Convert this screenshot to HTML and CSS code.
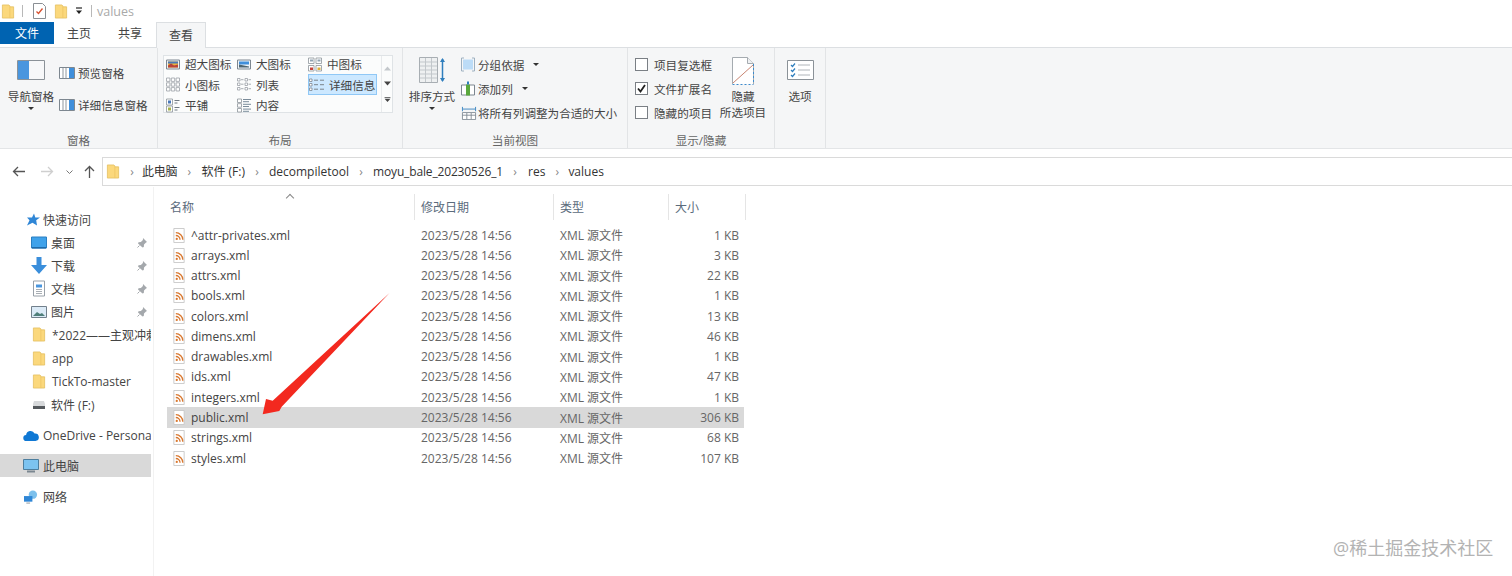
FILE: index.html
```html
<!DOCTYPE html>
<html lang="zh-CN">
<head>
<meta charset="utf-8">
<title>values</title>
<link rel="stylesheet" href="styles.css">
</head>
<body>
<svg class="sprite" width="0" height="0">
  <symbol id="folder" viewBox="0 0 14 16"><path d="M1 1h7l1 1v1h4v12H1z" fill="#fbd87c" stroke="#e3bd5c" stroke-width=".8"/><path d="M9 3v12" stroke="#f0c766" stroke-width="1"/></symbol>
  <symbol id="xml" viewBox="0 0 14 16"><path d="M1.500 .5h11v15h-11z" fill="#fff" stroke="#c9c9c9"/><circle cx="4.600" cy="11.600" r="1.200" fill="#d9772e"/><path d="M3.600 8a4.500 4.500 0 0 1 4.500 4.500M3.600 5a7.500 7.500 0 0 1 7.500 7.500" fill="none" stroke="#d9772e" stroke-width="1.400"/></symbol>
  <symbol id="pin" viewBox="0 0 12 12"><path d="M7 1l4 4-1 .6-2 2-.2 2.400-1.300.5L2 6.500l.5-1.300 2.400-.2 2-2z" fill="#a4a8ac"/><path d="M3.500 8.500L1.500 10.500" stroke="#a4a8ac"/></symbol>
  <symbol id="pane" viewBox="0 0 16 12"><path d="M.5.500h15v11H.5z" fill="#fff" stroke="#7d8790"/><path d="M10 1h5v10h-5z" fill="#3f8fdb"/><path d="M4 1v10M7 1v10" stroke="#8f979e"/></symbol>
  <symbol id="g-xl" viewBox="0 0 14 14"><path d="M.5 2.500h13v9H.5z" fill="#eef1f3" stroke="#7d8790"/><path d="M2 4h10v6H2z" fill="#e9b43c"/><path d="M2 8l3-2 3 2 4-1v3H2z" fill="#b8433a"/><path d="M2 4h10v2H2z" fill="#4a78b8"/></symbol>
  <symbol id="g-l" viewBox="0 0 14 14"><path d="M.5 2.500h13v9H.5z" fill="#eef5fb" stroke="#7d8790"/><path d="M2 4h10v3H2z" fill="#3f8fdb"/><path d="M2 7l5 1 5 1v1H2z" fill="#4d6570"/></symbol>
  <symbol id="g-m" viewBox="0 0 14 14"><path d="M.5.500h5.500v5.500H.5zM8 .5h5.500v5.500H8zM.5 8h5.500v5.500H.5zM8 8h5.500v5.500H8z" fill="#fff" stroke="#8d949b" stroke-width=".8"/><path d="M2 10h3v2.500H2z" fill="#c9443a"/><path d="M9.500 10h3v2.500h-3z" fill="#dcb13c"/><path d="M2 2h3v2H2zM9.500 2h3v2h-3z" fill="#8fa3b3"/></symbol>
  <symbol id="g-s" viewBox="0 0 14 14"><path d="M.5.500h3.400v3.400H.5zM5.300.5h3.400v3.400H5.300zM10.100.5h3.400v3.400h-3.400zM.5 5.300h3.400v3.400H.5zM5.300 5.300h3.400v3.400H5.300zM10.100 5.300h3.400v3.400h-3.400zM.5 10.100h3.400v3.400H.5zM5.300 10.100h3.400v3.400H5.300zM10.100 10.100h3.400v3.400h-3.400z" fill="#fff" stroke="#9aa0a6" stroke-width=".8"/></symbol>
  <symbol id="g-list" viewBox="0 0 14 14"><path d="M.5 1h2.500v2.500H.5zM.5 5.500h2.500v2.500H.5zM.5 10h2.500v2.500H.5zM8 1h2.500v2.500H8zM8 5.500h2.500v2.500H8zM8 10h2.500v2.500H8z" fill="#fff" stroke="#9aa0a6" stroke-width=".8"/><path d="M4 2.200h2.500M4 6.700h2.500M4 11.200h2.500M11.500 2.200h2.500M11.500 6.700h2.500M11.500 11.200h2.500" stroke="#a8aeb3"/></symbol>
  <symbol id="g-det" viewBox="0 0 16 14"><path d="M.5 1h2.500v2.500H.5zM.5 5.500h2.500v2.500H.5zM.5 10h2.500v2.500H.5z" fill="#fff" stroke="#7d8790" stroke-width=".8"/><path d="M5 2.200h4M5 6.700h4M5 11.200h4M11 2.200h4M11 6.700h4M11 11.200h4" stroke="#7b848c"/></symbol>
  <symbol id="g-tile" viewBox="0 0 14 14"><path d="M.5.500h6v6H.5zM.5 7.500h6v6H.5z" fill="#fff" stroke="#8d949b" stroke-width=".8"/><path d="M2 2h3v3H2z" fill="#4a78b8"/><path d="M2 9h3v3H2z" fill="#a7b34a"/><path d="M8.500 2h5M8.500 4.500h3M8.500 9h5M8.500 11.500h3" stroke="#6f7880"/></symbol>
  <symbol id="g-cont" viewBox="0 0 14 14"><path d="M.5.500h4v3.500H.5zM.5 5.200h4v3.500H.5zM.5 10h4v3.500H.5z" fill="#fff" stroke="#8d949b" stroke-width=".8"/><path d="M6 1h8M6 3.200h6M6 5.800h8M6 8h6M6 10.600h8M6 12.800h6" stroke="#7b8c9a"/></symbol>
</svg>

<div class="titlebar">
  <svg class="ic14"><use href="#folder"/></svg>
  <span class="tsep"></span>
  <svg class="docq" viewBox="0 0 13 16"><path d="M.5.500h9l3 3v12H.5z" fill="#fff" stroke="#8a8f94"/><path d="M3.500 8.500l2 2 4-5" fill="none" stroke="#d8502f" stroke-width="1.300"/></svg>
  <svg class="ic14 second"><use href="#folder"/></svg>
  <svg class="qa" viewBox="0 0 8 8"><path d="M1 1h6" stroke="#222" stroke-width="1.200"/><path d="M1 3.500h6L4 7z" fill="#222"/></svg>
  <span class="tsep"></span>
  <span class="title">values</span>
</div>

<nav class="tabs">
  <span class="tab file">文件</span>
  <span class="tab home">主页</span>
  <span class="tab share">共享</span>
  <span class="tab view">查看</span>
</nav>

<section class="ribbon">
  <div class="group g1">
    <div class="gbody">
      <div class="bigbtn nav">
        <svg class="navic" viewBox="0 0 28 20"><path d="M.5.500h27v19H.5z" fill="#f7f8f9" stroke="#8b9298"/><path d="M1 1h11v18H1z" fill="#4a96de"/></svg>
        <span>导航窗格</span><i class="caret"></i>
      </div>
      <div class="stack panes">
        <div class="cmd"><svg class="ic16"><use href="#pane"/></svg><span>预览窗格</span></div>
        <div class="cmd"><svg class="ic16"><use href="#pane"/></svg><span>详细信息窗格</span></div>
      </div>
    </div>
    <div class="glabel">窗格</div>
  </div>

  <div class="group g2">
    <div class="gbody">
      <div class="gallery">
        <div class="grid">
          <div class="gi"><svg class="ic14"><use href="#g-xl"/></svg>超大图标</div>
          <div class="gi"><svg class="ic14"><use href="#g-l"/></svg>大图标</div>
          <div class="gi"><svg class="ic14"><use href="#g-m"/></svg>中图标</div>
          <div class="gi"><svg class="ic14"><use href="#g-s"/></svg>小图标</div>
          <div class="gi"><svg class="ic14"><use href="#g-list"/></svg>列表</div>
          <div class="gi sel"><svg class="ic16"><use href="#g-det"/></svg>详细信息</div>
          <div class="gi"><svg class="ic14"><use href="#g-tile"/></svg>平铺</div>
          <div class="gi"><svg class="ic14"><use href="#g-cont"/></svg>内容</div>
        </div>
        <div class="gscroll">
          <svg viewBox="0 0 7 4"><path d="M0 4l3.500-4L7 4z" fill="#c4c8cc"/></svg>
          <svg viewBox="0 0 7 4"><path d="M0 0l3.500 4L7 0z" fill="#444"/></svg>
          <svg viewBox="0 0 7 6"><path d="M0 .5h7" stroke="#444"/><path d="M0 2l3.500 4L7 2z" fill="#444"/></svg>
        </div>
      </div>
    </div>
    <div class="glabel">布局</div>
  </div>

  <div class="group g3">
    <div class="gbody">
      <div class="bigbtn sort">
        <svg class="sortic" viewBox="0 0 27 26"><path d="M.5.500h18v25H.5z" fill="#eef0f1" stroke="#a8aeb3"/><path d="M1 5h17M1 9h17M1 13h17M1 17h17M1 21h17M6.500 1v24M12.500 1v24" stroke="#c2c7cb"/><path d="M23.500 2v22" stroke="#2f7ebd" stroke-width="1.500"/><path d="M21 5l2.500-4L26 5zM21 21l2.500 4L26 21z" fill="#2f7ebd"/></svg>
        <span>排序方式</span><i class="caret"></i>
      </div>
      <div class="stack view3">
        <div class="cmd"><svg class="ic14" viewBox="0 0 14 14"><path d="M2 2h10v10H2z" fill="#bcdcf7"/><path d="M3 .5H.5v13H3M11 .5h2.500v13H11" fill="none" stroke="#9db0c0"/></svg><span>分组依据</span><i class="tri"></i></div>
        <div class="cmd"><svg class="ic14" viewBox="0 0 14 14"><path d="M.5 3.500h13v10H.5z" fill="#fff" stroke="#7d8790"/><path d="M5 3h4v11H5z" fill="#5aa83c"/><path d="M7 0v3" stroke="#2f7ebd" stroke-width="2"/></svg><span>添加列</span><i class="tri"></i></div>
        <div class="cmd"><svg class="ic16" viewBox="0 0 16 16"><path d="M1 3.500h14" stroke="#2f7ebd"/><path d="M.5 1v5M15.500 1v5" stroke="#2f7ebd"/><path d="M.5 7.500h15v8H.5zM.5 10.500h15M5.500 8v7M10.500 8v7" fill="#fff" stroke="#7d8790"/></svg><span>将所有列调整为合适的大小</span></div>
      </div>
    </div>
    <div class="glabel">当前视图</div>
  </div>

  <div class="group g4">
    <div class="gbody">
      <div class="stack checks">
        <label class="check"><i class="box"></i>项目复选框</label>
        <label class="check"><i class="box on"><svg viewBox="0 0 11 11"><path d="M2 5.500l2.500 3L9 2" fill="none" stroke="#222" stroke-width="1.800"/></svg></i>文件扩展名</label>
        <label class="check"><i class="box"></i>隐藏的项目</label>
      </div>
      <div class="bigbtn hide">
        <svg class="hideic" viewBox="0 0 22 28"><path d="M.5 27V.5h15l6 6V27" fill="#fff" stroke="#a5abb0"/><path d="M15.500.5v6h6" fill="#eef0f2" stroke="#a5abb0"/><path d="M.5 27.500h21" stroke="#3d8bcc" stroke-dasharray="2 2"/><path d="M21.500 7v20" stroke="#3d8bcc" stroke-dasharray="2 2"/><path d="M1 26L21 8" stroke="#c98572"/></svg>
        <span>隐藏</span><span>所选项目</span>
      </div>
    </div>
    <div class="glabel">显示/隐藏</div>
  </div>

  <div class="group g5">
    <div class="gbody">
      <div class="bigbtn opts">
        <svg class="optic" viewBox="0 0 27 20"><path d="M.5.500h26v19H.5z" fill="#fff" stroke="#8b9298"/><path d="M11 5h12M11 10h12M11 15h12" stroke="#b0b5ba"/><path d="M4 5l1.500 1.500L8 3.500M4 10l1.500 1.500L8 8.500M4 15l1.500 1.500L8 13.500" fill="none" stroke="#2f7ebd" stroke-width="1.200"/></svg>
        <span>选项</span>
      </div>
    </div>
  </div>
</section>

<div class="addr">
  <div class="navbtns">
    <svg class="back" viewBox="0 0 13 11"><path d="M13 5.500H1.500M6 1L1.500 5.500 6 10" fill="none" stroke="#555" stroke-width="1.300"/></svg>
    <svg class="fwd" viewBox="0 0 13 11"><path d="M0 5.500h11.500M7 1l4.500 4.500L7 10" fill="none" stroke="#cfcfcf" stroke-width="1.300"/></svg>
    <svg class="drop" viewBox="0 0 7 4"><path d="M.5.500L3.500 3.500 6.500.5" fill="none" stroke="#777"/></svg>
    <svg class="up" viewBox="0 0 11 13"><path d="M5.500 13V1.500M1 6l4.500-4.500L10 6" fill="none" stroke="#555" stroke-width="1.300"/></svg>
  </div>
  <div class="crumbs">
    <svg class="ic14"><use href="#folder"/></svg>
    <b>›</b><span>此电脑</span><b>›</b><span>软件 (F:)</span><b>›</b><span>decompiletool</span><b>›</b><span>moyu_bale_20230526_1</span><b>›</b><span>res</span><b>›</b><span>values</span>
  </div>
</div>

<main class="main">
  <aside class="side">
    <div class="si quick"><svg class="ic14" viewBox="0 0 14 14"><path d="M8 1l1.300 4H14l-3.800 2.800L11 13 6.500 10.300 1 13l2.500-5.200L1 5h5z" fill="#2f86d6"/></svg>快速访问</div>
    <div class="si l2"><svg class="ic16" viewBox="0 0 16 14"><path d="M.5 1h15v11H.5z" fill="#3fa2ea" stroke="#2a7fc2"/><path d="M1 11h14v1.500H1z" fill="#1f6aa8"/></svg>桌面<svg class="pin"><use href="#pin"/></svg></div>
    <div class="si l2"><svg class="ic16 tall" viewBox="0 0 16 17"><path d="M5.500 0h5v8H16l-8 9-8-9h5.500z" fill="#3a8edb"/></svg>下载<svg class="pin"><use href="#pin"/></svg></div>
    <div class="si l2"><svg class="ic16 tall" viewBox="0 0 16 16"><path d="M2.500.5h11v15h-11z" fill="#fff" stroke="#98a0a8"/><path d="M5 4h6v3H5z" fill="#4a96de"/><path d="M5 9h6M5 11h6M5 13h6" stroke="#a8aeb4"/></svg>文档<svg class="pin"><use href="#pin"/></svg></div>
    <div class="si l2"><svg class="ic16" viewBox="0 0 16 14"><path d="M.5 1.500h15v11H.5z" fill="#dcebf7" stroke="#72808c"/><path d="M2 11l4-4 3 2 2-1 3 3z" fill="#4f7f7a"/></svg>图片<svg class="pin"><use href="#pin"/></svg></div>
    <div class="si l2"><svg class="ic14 fold"><use href="#folder"/></svg><span class="clip">*2022——主观冲刺</span></div>
    <div class="si l2 app"><svg class="ic14 fold"><use href="#folder"/></svg>app</div>
    <div class="si l2"><svg class="ic14 fold"><use href="#folder"/></svg>TickTo-master</div>
    <div class="si l2"><svg class="ic16" viewBox="0 0 16 12"><path d="M2 5l1-3h10l1 3v5H2z" fill="#d7d9db"/><path d="M2 7h12v3H2z" fill="#55595d"/></svg>软件 (F:)</div>
    <div class="si l1 od"><svg class="ic16" viewBox="0 0 16 11"><path d="M3.500 10.500a3 3 0 0 1-.4-6A4.500 4.500 0 0 1 11.600 3a3.600 3.600 0 0 1 .9 7.500z" fill="#0f78d4"/></svg><span class="clip">OneDrive - Personal</span></div>
    <div class="si l1 pc"><svg class="ic16" viewBox="0 0 16 14"><path d="M.5.500h15v10H.5z" fill="#7cc3f0" stroke="#4d7e9e"/><path d="M4 12.500h8" stroke="#7b8790" stroke-width="2"/></svg>此电脑</div>
    <div class="si l1 net"><svg class="ic16" viewBox="0 0 16 15"><circle cx="10" cy="5" r="4.500" fill="#7cc0ec"/><path d="M.5 6.500h9v6h-9z" fill="#2f86d6"/><path d="M3 14h4" stroke="#8a9299"/></svg>网络</div>
  </aside>

  <section class="files">
    <i class="sortup"></i>
    <div class="row head">
      <span class="c-name">名称</span><span class="c-date">修改日期</span><span class="c-type">类型</span><span class="c-size">大小</span>
    </div>
    <div class="rows">
      <div class="row"><span class="c-name"><svg class="ic14"><use href="#xml"/></svg>^attr-privates.xml</span><span class="c-date">2023/5/28 14:56</span><span class="c-type">XML 源文件</span><span class="c-size">1 KB</span></div>
      <div class="row"><span class="c-name"><svg class="ic14"><use href="#xml"/></svg>arrays.xml</span><span class="c-date">2023/5/28 14:56</span><span class="c-type">XML 源文件</span><span class="c-size">3 KB</span></div>
      <div class="row"><span class="c-name"><svg class="ic14"><use href="#xml"/></svg>attrs.xml</span><span class="c-date">2023/5/28 14:56</span><span class="c-type">XML 源文件</span><span class="c-size">22 KB</span></div>
      <div class="row"><span class="c-name"><svg class="ic14"><use href="#xml"/></svg>bools.xml</span><span class="c-date">2023/5/28 14:56</span><span class="c-type">XML 源文件</span><span class="c-size">1 KB</span></div>
      <div class="row"><span class="c-name"><svg class="ic14"><use href="#xml"/></svg>colors.xml</span><span class="c-date">2023/5/28 14:56</span><span class="c-type">XML 源文件</span><span class="c-size">13 KB</span></div>
      <div class="row"><span class="c-name"><svg class="ic14"><use href="#xml"/></svg>dimens.xml</span><span class="c-date">2023/5/28 14:56</span><span class="c-type">XML 源文件</span><span class="c-size">46 KB</span></div>
      <div class="row"><span class="c-name"><svg class="ic14"><use href="#xml"/></svg>drawables.xml</span><span class="c-date">2023/5/28 14:56</span><span class="c-type">XML 源文件</span><span class="c-size">1 KB</span></div>
      <div class="row"><span class="c-name"><svg class="ic14"><use href="#xml"/></svg>ids.xml</span><span class="c-date">2023/5/28 14:56</span><span class="c-type">XML 源文件</span><span class="c-size">47 KB</span></div>
      <div class="row"><span class="c-name"><svg class="ic14"><use href="#xml"/></svg>integers.xml</span><span class="c-date">2023/5/28 14:56</span><span class="c-type">XML 源文件</span><span class="c-size">1 KB</span></div>
      <div class="row picked"><span class="c-name"><svg class="ic14"><use href="#xml"/></svg>public.xml</span><span class="c-date">2023/5/28 14:56</span><span class="c-type">XML 源文件</span><span class="c-size">306 KB</span></div>
      <div class="row"><span class="c-name"><svg class="ic14"><use href="#xml"/></svg>strings.xml</span><span class="c-date">2023/5/28 14:56</span><span class="c-type">XML 源文件</span><span class="c-size">68 KB</span></div>
      <div class="row"><span class="c-name"><svg class="ic14"><use href="#xml"/></svg>styles.xml</span><span class="c-date">2023/5/28 14:56</span><span class="c-type">XML 源文件</span><span class="c-size">107 KB</span></div>
    </div>
  </section>
</main>

<svg class="arrow" viewBox="0 0 1512 576"><path d="M389.500 293L281.700 406.700 279.300 411 262.700 414.300 266 399 272.700 400.700z" fill="#f3291f"/></svg>
<div class="mark">@稀土掘金技术社区</div>
</body>
</html>
```
FILE: styles.css
```css
* { box-sizing: border-box; }
html, body { margin: 0; height: 576px; overflow: hidden; background: #fff; }
body { position: relative; font: 12px "Open Sans", "Noto Sans CJK SC", sans-serif; color: #444; }
.sprite { position: absolute; }
svg { display: block; flex: none; }
.ic14 { width: 14px; height: 15px; }
.ic16 { width: 16px; height: 14px; }
.ic16.tall { height: 17px; }

.titlebar { height: 22px; display: flex; align-items: center; padding-left: 1px; }
.tsep { width: 1px; height: 12px; background: #b8b8b8; margin: 0 10px 0 7px; }
.docq { width: 13px; height: 16px; }
.second { margin-left: 8px; }
.qa { width: 8px; height: 8px; margin-left: 7px; }
.titlebar .tsep:nth-of-type(2) { margin-left: 8px; margin-right: 5px; }
.title { color: #a9a9a9; font-size: 12.500px; }

.tabs { height: 26px; display: flex; align-items: flex-start; font-size: 12px; color: #444; }
.tab { height: 22px; line-height: 23px; text-align: center; }
.file { width: 54px; background: #0063b1; color: #fff; }
.home { width: 50px; }
.share { width: 52px; }
.view { width: 50px; height: 26px; line-height: 25px; background: #f5f6f7; border: 1px solid #dcdfe2; border-bottom: 0; position: relative; z-index: 1; }

.ribbon { height: 102px; margin-top: -1px; display: flex; background: #f5f6f7; border-top: 1px solid #dcdfe2; border-bottom: 1px solid #e3e5e7; font-size: 11.600px; }
.group { display: flex; flex-direction: column; border-right: 1px solid #e2e4e6; }
.gbody { flex: 1; display: flex; min-height: 0; }
.glabel { height: 19px; padding-top: 4px; text-align: center; line-height: 16px; color: #666; }
.g1 { width: 158px; }
.g2 { width: 245px; }
.g3 { width: 225px; }
.g4 { width: 147px; }
.g5 { width: 51px; padding-bottom: 19px; }
.bigbtn { display: flex; flex-direction: column; align-items: center; line-height: 16px; }
.caret { width: 0; height: 0; border: 3px solid transparent; border-top: 3px solid #333; border-bottom: 0; margin-top: 2px; }
.tri { width: 0; height: 0; border: 3px solid transparent; border-top: 3px solid #333; border-bottom: 0; margin-left: 6px; }
.nav { width: 48px; margin-left: 7px; padding-top: 12px; }
.navic { width: 28px; height: 20px; margin-bottom: 9px; }
.nav span { white-space: nowrap; }
.stack { display: flex; flex-direction: column; }
.panes { margin-left: 4px; padding-top: 17px; gap: 17px; }
.cmd { display: flex; align-items: center; height: 15px; gap: 3px; white-space: nowrap; }
.panes .cmd { gap: 3px; }

.gallery { width: 230px; height: 58px; margin: 7px 0 0 5px; display: flex; background: #fbfcfc; border: 1px solid #dfe3e6; }
.grid { width: 217px; height: 61px; display: grid; grid-template-columns: 71px 71px 73px; grid-template-rows: 20px 21px 20px; padding: 0 0 0 2px; margin-top: -2px; }
.gi { display: flex; align-items: center; gap: 5px; white-space: nowrap; }
.gi.sel { background: #cce8ff; border: 1px solid #90c8f6; margin-right: 4px; gap: 4px; }
.gi.sel svg { width: 16px; }
.gscroll { flex: 1; display: flex; flex-direction: column; align-items: center; justify-content: space-around; border-left: 1px solid #e8eaec; padding: 5px 0; }
.gscroll svg { width: 7px; height: 5px; }

.sort { width: 48px; margin-left: 5px; padding-top: 9px; }
.sortic { width: 27px; height: 26px; margin-bottom: 6px; }
.sort span { white-space: nowrap; }
.view3 { margin-left: 5px; padding-top: 9px; gap: 9px; }
.view3 .cmd { gap: 3px; }
.view3 .cmd:last-child { gap: 1px; }

.checks { margin-left: 7px; padding-top: 9px; gap: 9px; }
.check { display: flex; align-items: center; height: 15px; gap: 6px; white-space: nowrap; }
.box { width: 13px; height: 13px; background: #fff; border: 1px solid #7a7f85; display: flex; align-items: center; justify-content: center; }
.box svg { width: 11px; height: 11px; }
.hide { width: 50px; margin-left: 6px; padding-top: 9px; }
.hide span { white-space: nowrap; line-height: 16px; }
.hideic { width: 22px; height: 28px; margin-bottom: 4px; }
.opts { width: 50px; padding-top: 12px; }
.optic { width: 27px; height: 20px; margin-bottom: 9px; }

.addr { display: flex; height: 29px; margin-top: 8px; margin-bottom: 1px; }
.navbtns { width: 102px; display: flex; align-items: center; padding-left: 12px; }
.back { width: 13px; height: 11px; }
.fwd { width: 13px; height: 11px; margin-left: 16px; }
.drop { width: 7px; height: 4px; margin-left: 12px; }
.up { width: 11px; height: 13px; margin-left: 11px; }
.crumbs { flex: 1; display: flex; align-items: center; padding: 0 0 1px 3px; border: 1px solid #dadada; border-right: 0; color: #333; white-space: nowrap; }
.crumbs b { font-weight: 400; width: 24px; text-align: center; color: #888; }
.crumbs span:nth-of-type(1) { margin-left: -2px; letter-spacing: -.2px; }
.crumbs span:nth-of-type(4) { letter-spacing: -.15px; }
.crumbs span:nth-of-type(5) { margin-left: 1px; }
.crumbs span:nth-of-type(6) { margin-left: -1px; }

.main { display: flex; height: 389px; }
.side { width: 154px; padding-top: 21px; border-right: 1px solid #f2f2f2; }
.si { display: flex; align-items: center; height: 23px; gap: 4px; white-space: nowrap; color: #444; width: 151px; }
.quick { padding-left: 26px; gap: 3px; }
.l2 { padding-left: 31px; gap: 4px; }
.l2 .fold { margin-right: 2px; margin-left: 1px; }
.app { margin-top: 1px; }
.l1 { padding-left: 23px; }
.pin { width: 12px; height: 12px; margin-left: auto; margin-right: 3px; }
.clip { overflow: hidden; }
.od { margin-top: 8px; }
.pc { margin-top: 7px; background: #d9d9d9; }
.net { margin-top: 8px; }

.files { position: relative; flex: 1; padding: 7px 0 0 13px; }
.sortup { position: absolute; left: 133px; top: 8px; width: 6px; height: 6px; border-left: 1px solid #888; border-top: 1px solid #888; transform: rotate(45deg); }
.row { display: flex; width: 577px; height: 20.270px; align-items: center; white-space: nowrap; color: #666; }
.row .c-name { color: #444; }
.c-name { width: 248px; display: flex; align-items: center; gap: 5px; padding-left: 5px; }
.c-date { width: 139px; padding-left: 6px; }
.c-type { width: 116px; padding-left: 6px; }
.c-size { width: 74px; text-align: right; padding-right: 5px; }
.head { height: 26px; width: 580px; color: #5b6b7c; }
.head .c-name { color: #5b6b7c; padding-left: 3px; }
.head span { height: 26px; line-height: 27px; border-right: 1px solid #e5e5e5; display: block; }
.head .c-date { width: 139px; }
.head .c-type { width: 115px; }
.head .c-size { width: 77px; text-align: left; padding-left: 6px; }
.rows { padding-top: 5px; }
.picked { background: #d9d9d9; }

.arrow { position: absolute; left: 0; top: 0; width: 1512px; height: 576px; pointer-events: none; }
.mark { position: absolute; left: 1333px; top: 538px; font-size: 18px; line-height: 20px; color: #b3b3b3; white-space: nowrap; }
```
